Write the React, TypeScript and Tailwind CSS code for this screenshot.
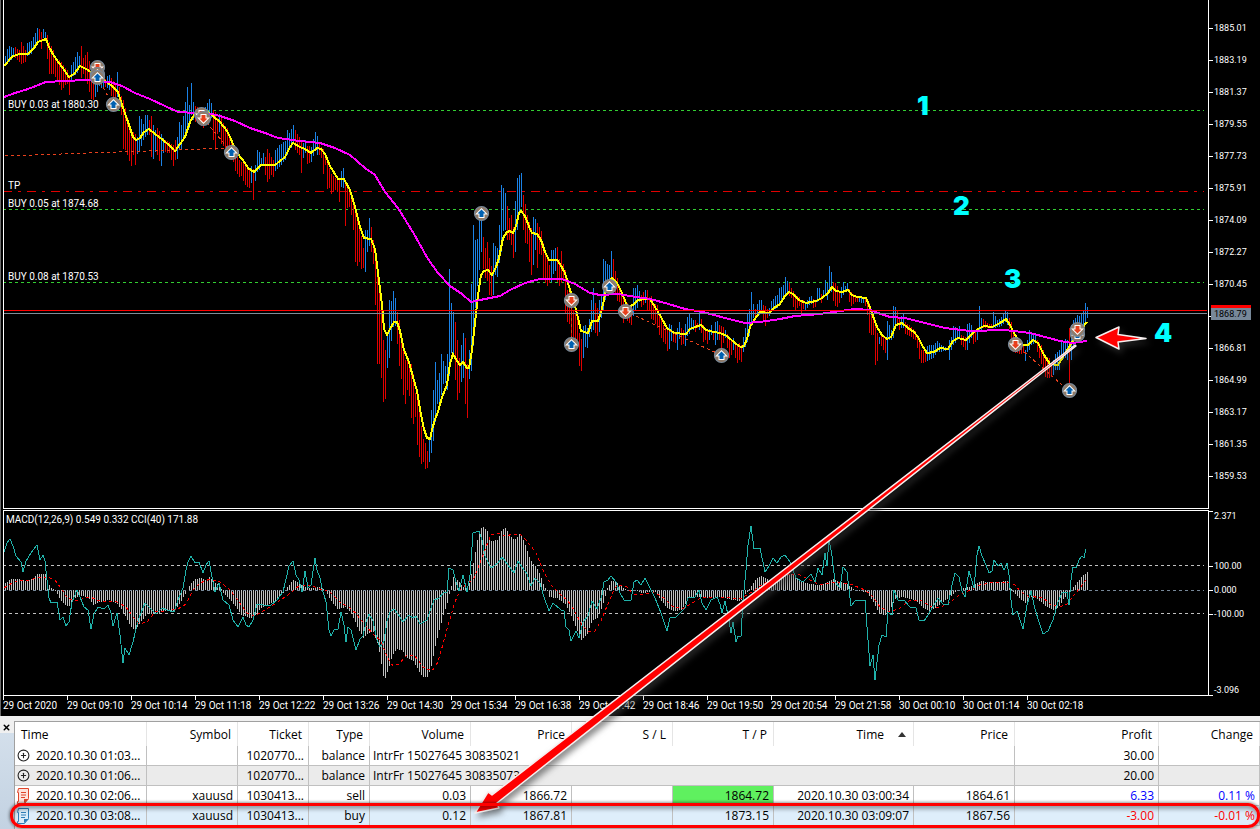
import type { ReactNode } from "react";
import { CirclePlus, X } from "lucide-react";

type Point = [number, number];

// "x,y x,y ..." -> points
const toPoints = (s: string): Point[] =>
  s
    .trim()
    .split(/\s+/)
    .map((p) => p.split(",").map(Number) as Point);

const BAR_STEP = 2;

// Bars: x,high,low. A leading r / b switches the colour for the bars that follow.
const BARS = `
b5,56,66 7,49,64 9,46,62 11,47,60 13,48,55 r15,47,58 19,50,62 21,42,64 25,50,62 b27,43,56 31,41,54 35,33,44 37,28,42
r39,29,40 41,32,49 b43,29,38 45,32,40 r47,35,59 49,42,74 53,50,74 55,60,77 59,60,85 61,62,90 65,68,85 67,70,84 69,75,95
b71,65,82 73,62,76 77,52,73 79,56,68 r81,46,78 83,58,74 87,52,84 91,70,99 93,74,100 b95,76,97 99,78,86 101,78,88
r105,79,87 b107,76,88 109,75,90 r111,78,96 115,83,103 b117,72,97 r119,87,108 121,96,115 123,100,149 125,108,150
127,117,155 131,130,166 133,132,155 135,134,165 b137,137,154 139,116,152 141,119,146 143,124,140 145,115,137 147,115,135
r149,120,135 151,116,157 b153,125,159 155,130,152 r157,128,155 b161,134,166 163,138,153 r165,140,152 169,142,153
173,145,166 175,140,160 b177,137,159 179,122,150 181,125,150 183,116,140 187,87,130 189,105,128 191,83,115 193,102,120
r195,106,122 199,108,124 203,108,128 b205,107,122 209,99,120 211,103,118 r213,110,140 215,112,150 217,118,134
b219,114,132 r221,115,144 223,123,146 227,128,150 229,135,150 233,150,162 235,154,171 239,160,177 241,162,176
245,162,185 249,170,188 b251,166,183 r253,169,200 b255,165,181 257,150,172 259,152,170 261,158,164 263,153,165
r265,157,175 267,149,182 271,157,175 273,160,177 b275,150,171 279,145,167 283,142,162 285,141,160 287,130,155
289,133,150 291,129,148 293,125,143 r295,130,150 299,137,155 301,141,173 b303,143,158 305,140,153 r307,146,164
309,146,163 b311,147,162 313,139,156 315,132,150 317,136,155 r319,143,155 321,147,158 323,149,174 325,155,165
327,162,189 329,168,188 331,174,194 335,178,190 337,180,192 339,179,202 b341,171,187 343,168,188 r345,180,226
347,187,208 349,190,207 351,195,215 353,199,230 355,210,262 357,221,266 359,227,262 361,236,269 363,248,268
b365,230,272 367,230,252 369,218,246 r371,227,252 373,240,264 375,248,305 377,264,364 379,282,364 381,305,378
383,340,402 385,350,399 b387,332,368 389,300,358 391,301,341 393,291,327 395,298,326 r397,312,344 399,320,366
401,333,379 403,350,395 405,360,404 407,356,390 409,363,396 411,364,418 413,374,424 415,393,417 417,395,445
419,405,457 421,426,464 423,439,462 425,443,469 427,451,468 b429,438,462 431,410,453 433,390,441 435,362,422
437,380,404 439,373,404 441,354,395 443,361,384 445,366,383 447,354,390 449,269,376 451,303,353 453,312,354
r455,322,380 457,340,400 459,358,393 b461,345,382 463,333,378 r465,338,404 467,364,418 b469,350,379 471,284,371
473,225,346 475,240,308 477,239,286 479,220,270 481,218,252 r483,237,269 485,248,278 487,242,281 489,258,295
491,266,296 b493,243,295 495,246,275 497,248,277 499,225,263 501,185,252 503,188,231 505,193,230 r507,206,240
509,218,240 511,215,245 513,227,258 b515,201,252 517,178,230 519,175,214 521,173,207 r523,195,230 525,204,243
527,215,244 529,222,262 531,228,275 b533,217,265 535,219,250 r537,223,268 539,227,254 541,231,255 543,243,280
545,250,283 547,256,286 549,265,283 b551,250,282 553,250,274 555,248,271 r557,247,282 559,259,286 561,251,283
563,264,279 565,270,313 567,290,322 569,292,324 571,298,340 573,310,337 577,318,340 579,333,366 581,339,371
b583,326,358 585,325,347 587,328,348 589,319,337 591,300,332 593,288,330 r595,303,333 597,308,336 b599,300,332
601,295,318 603,259,311 605,261,300 607,264,290 609,265,285 611,251,283 r613,259,285 615,271,295 617,278,301
619,285,302 623,295,323 625,300,318 629,305,323 631,306,325 b633,288,316 635,288,310 637,285,308 639,291,302
r641,295,307 643,292,305 b645,290,303 r647,290,310 649,297,310 651,296,319 653,303,320 657,305,328 659,315,335
661,318,338 663,325,342 665,328,344 667,330,351 b669,324,349 671,325,341 r673,331,342 675,335,343 b677,328,350
679,322,339 r681,328,345 683,330,344 b685,324,346 687,317,336 689,314,334 691,318,330 693,320,330 r695,320,332
697,323,328 b699,311,330 r701,319,333 703,325,342 705,328,340 707,330,344 b709,329,340 711,325,335 r713,331,340
b715,322,345 717,321,340 r719,325,340 721,326,350 723,327,343 b725,330,338 r727,334,348 729,340,358 731,340,355
b733,338,350 r735,343,358 737,345,363 739,343,360 741,345,362 b743,337,352 745,328,347 747,313,342 749,309,336
751,292,325 753,304,318 r755,309,320 b757,304,313 759,300,315 761,300,310 r763,305,320 765,306,326 767,309,318
b769,308,316 771,301,312 775,296,309 777,295,308 779,288,305 783,285,300 785,277,294 787,281,292 r789,283,296
791,288,298 793,291,307 795,294,310 799,297,306 801,301,315 803,300,309 b805,302,311 809,297,305 811,296,304
r813,299,308 815,301,307 b817,288,302 819,288,300 r821,294,303 b823,290,298 825,280,296 827,283,300 829,266,293
831,272,292 r833,282,301 835,283,306 837,286,307 839,291,303 b841,287,298 843,282,295 845,286,292 847,283,290
r849,289,302 851,292,306 855,296,302 857,297,302 b859,296,302 861,296,303 863,297,303 r865,298,306 867,299,315
869,303,333 871,310,335 873,315,335 875,322,365 877,333,361 b879,337,344 r881,336,346 885,338,353 b887,321,360
889,325,340 891,330,340 893,306,338 895,307,327 r897,311,325 899,318,330 b901,316,328 903,314,328 r905,322,334
909,325,336 915,331,340 917,335,348 919,340,359 921,350,363 925,350,362 b927,346,361 929,345,360 933,345,358
937,341,352 941,345,352 947,348,350 949,340,360 951,337,350 953,326,345 957,328,340 959,326,338 r961,335,345
963,336,347 965,337,350 b967,324,350 969,323,343 971,325,338 r973,330,344 b977,329,340 979,306,330 981,318,330
r983,319,328 987,323,328 991,324,328 b993,312,328 997,320,327 1001,317,326 1005,311,322 1007,312,325 r1009,318,329
1011,322,345 1013,333,352 1019,345,354 1023,346,353 b1025,350,361 1027,340,352 1029,330,350 1031,333,345 1035,334,343
r1037,340,352 1041,345,364 1045,355,377 1049,358,378 1051,363,377 b1053,360,375 1055,354,370 1059,350,370
1061,342,360 1065,339,358 1067,340,360 r1069,328,391 b1071,325,360 1073,320,345 1077,315,335 1079,316,330
1083,311,328 1085,303,325 1087,307,318`;

const FAST_MA =
  "4,66 13,56 20,54 28,54 34,48 38,42 46,39 49,47 54,56 62,67 69,77 74,74 80,66 88,70 97,77 104,80 112,86 118,92 122,105 128,122 133,137 136,140 140,138 144,132 149,129 155,134 163,140 170,146 175,151 180,144 185,137 190,122 194,115 200,110 208,112 214,117 220,122 227,131 231,139 236,152 243,160 248,168 254,172 261,165 275,165 285,157 290,147 293,143 300,147 305,149 311,153 317,148 321,149 325,154 330,166 338,179 344,179 350,190 355,207 360,227 364,238 371,239 375,249 378,273 382,305 384,329 387,335 390,329 394,322 397,322 400,331 404,350 409,362 413,377 417,391 421,415 424,429 427,438 430,439 432,430 435,419 438,412 442,397 447,385 450,364 453,354 457,361 460,365 463,362 467,368 469,368 472,350 475,323 478,295 481,275 484,271 488,270 492,275 496,267 499,258 503,238 507,232 510,231 513,233 516,226 519,213 521,211 525,216 530,229 532,233 537,234 541,240 545,252 549,260 557,260 560,264 565,273 570,290 574,302 578,318 581,331 588,333 592,321 598,321 601,312 604,300 607,283 612,278 617,283 622,293 628,308 634,304 638,300 645,299 650,299 655,307 661,317 667,328 674,333 686,334 690,329 695,327 701,325 706,330 714,332 720,333 727,336 736,344 741,347 744,346 747,339 750,327 754,320 760,312 769,313 774,308 780,304 785,296 789,292 793,294 799,300 806,303 816,301 822,298 828,293 832,287 836,291 842,292 848,290 852,295 857,297 866,298 869,305 873,316 877,327 882,335 887,339 891,337 896,325 902,323 908,328 914,332 918,337 922,345 927,353 934,352 940,348 948,349 953,341 958,338 966,340 972,334 978,329 984,326 992,327 1000,323 1006,319 1010,325 1015,335 1022,345 1028,345 1033,340 1038,343 1044,355 1050,364 1058,365 1063,357 1069,347 1077,335 1082,328 1087,322";

const SLOW_MA =
  "4,97 15,93 28,89 46,82 65,81 85,80 97,81 110,82 122,86 135,93 150,99 165,106 178,112 195,113 212,114 220,116 235,121 250,128 265,133 278,138 300,141 320,143 335,148 350,155 365,168 375,175 385,192 398,208 414,234 428,259 438,273 450,286 462,294 471,302 480,300 500,296 510,290 525,283 540,279 562,279 575,284 590,293 600,295 618,294 630,296 650,299 665,303 685,309 703,312 725,318 745,323 760,322 780,319 795,316 820,314 840,311 855,309 870,310 878,313 890,317 905,318 925,323 945,328 970,331 1005,330 1030,333 1045,337 1060,341 1072,343 1087,341";

const MACD =
  "5,583 11,579 19,579 25,581 29,580 33,578 37,574 45,574 48,583 51,588 54,590 57,594 61,601 65,605 69,606 73,600 78,596 84,596 88,598 93,605 99,602 108,600 116,603 121,609 127,620 131,627 134,630 137,627 141,621 147,614 156,614 163,611 174,611 179,604 185,594 190,584 195,579 200,578 205,580 209,577 214,582 219,585 223,593 229,599 235,606 241,615 247,617 250,619 256,614 261,608 269,604 275,602 282,594 288,586 293,580 298,583 304,587 314,588 318,587 322,588 325,591 331,601 337,609 345,607 351,613 358,629 363,638 368,633 373,632 378,646 382,670 384,681 388,669 392,656 396,649 402,650 406,658 413,661 418,670 422,677 427,677 431,666 435,646 439,630 443,615 447,603 450,590 453,577 458,581 463,587 467,588 470,580 473,563 477,540 480,530 482,526 487,531 490,541 497,540 502,529 505,528 510,536 514,540 520,533 525,545 530,560 538,570 543,584 547,591 549,597 557,598 565,604 571,616 577,631 581,640 587,634 592,620 598,617 603,603 607,588 611,581 616,582 622,587 628,591 636,590 642,593 648,592 655,592 660,600 667,608 674,611 681,610 686,603 689,597 697,597 710,598 722,597 732,600 740,601 746,593 750,588 755,580 760,576 765,578 770,581 780,578 790,574 795,576 800,581 810,584 818,585 826,583 832,579 840,582 847,584 853,589 860,591 866,592 872,600 878,612 884,616 889,611 895,599 902,597 910,599 917,602 923,608 928,611 934,609 941,603 950,597 956,591 962,588 968,587 975,584 981,581 988,582 996,582 1007,581 1012,591 1020,599 1025,603 1030,597 1036,598 1042,603 1048,608 1053,610 1058,608 1063,599 1068,594 1073,587 1078,581 1083,575 1087,572";

const SIGNAL =
  "4,588 12,583 20,580 30,580 40,577 48,577 55,580 61,588 67,598 75,601 82,599 90,597 100,601 117,602 126,607 134,618 139,624 147,622 155,612 165,611 178,609 186,604 193,590 200,583 210,579 220,582 230,590 240,603 247,613 255,616 265,610 275,604 288,595 300,585 310,585 320,589 330,592 340,602 352,609 362,621 372,633 381,641 387,657 393,666 399,664 407,655 415,656 423,667 432,671 438,662 443,644 449,622 455,602 460,590 468,583 474,578 480,563 486,547 491,535 497,533 505,536 514,534 520,534 527,541 536,553 543,570 551,585 560,594 568,601 574,610 582,625 588,631 595,631 601,621 607,606 613,592 617,585 627,587 633,594 645,594 654,592 664,598 672,606 682,609 692,603 702,597 720,597 740,599 752,592 763,584 775,579 790,574 800,575 810,580 820,585 835,582 850,584 865,590 873,597 880,607 890,612 900,608 910,600 920,600 930,606 938,608 948,604 958,596 970,590 980,585 990,583 1007,582 1015,585 1021,592 1028,596 1043,598 1050,604 1060,607 1067,604 1074,595 1080,588 1086,580";

const CCI =
  "4,552 7,543 10,539 13,546 16,556 21,562 23,572 26,561 31,553 37,545 40,560 43,555 45,561 47,580 49,598 51,603 57,602 60,620 63,617 66,626 69,622 72,602 77,590 80,597 84,607 88,610 91,629 94,614 98,607 104,609 108,605 111,613 113,626 117,613 120,635 123,663 125,648 129,655 133,642 136,629 139,618 145,603 150,608 156,614 162,608 167,610 174,612 178,600 183,588 186,570 188,562 191,556 195,563 199,562 203,573 206,565 209,561 212,577 215,592 219,583 223,600 229,605 233,620 238,627 243,617 246,625 249,627 253,620 257,604 263,605 270,606 277,600 283,592 286,579 289,566 293,561 296,575 299,580 302,592 305,571 308,588 311,585 315,558 317,570 320,578 322,588 326,602 329,630 331,636 334,630 338,629 341,612 344,625 346,642 348,627 351,630 356,650 360,639 363,636 366,622 369,614 373,621 377,640 380,647 384,641 387,621 390,612 394,609 398,614 403,622 409,615 413,618 416,616 420,624 427,620 431,608 434,600 439,598 444,592 447,592 449,568 453,570 456,582 459,591 463,575 467,592 470,575 473,533 479,531 482,540 485,556 491,568 498,563 502,557 508,565 514,573 518,561 522,567 527,574 531,586 535,578 540,583 544,597 549,611 553,603 561,610 564,611 566,627 569,630 571,641 576,631 579,638 583,622 588,616 592,601 597,609 602,595 604,582 608,580 611,576 616,582 620,593 624,600 631,600 634,582 637,580 641,585 645,578 650,588 655,598 661,613 667,631 670,618 676,617 681,612 685,608 688,598 695,597 699,590 702,603 706,610 711,600 717,597 720,604 722,613 725,601 729,620 731,633 733,622 736,642 738,636 741,636 743,600 746,570 748,545 751,526 754,549 760,548 765,572 769,566 773,558 777,563 781,557 785,555 790,562 796,578 803,582 808,577 811,574 815,582 818,568 822,575 825,553 827,566 829,539 832,556 835,582 840,588 843,567 847,572 851,606 855,601 865,600 868,640 870,666 873,655 875,680 879,645 882,635 886,637 888,612 892,615 894,590 898,600 904,600 910,607 916,608 919,620 924,621 928,615 934,605 938,598 943,604 948,605 952,585 955,573 959,577 962,591 965,597 969,571 974,588 977,555 979,546 982,556 986,565 989,573 992,571 994,560 998,566 1001,563 1004,570 1007,563 1009,575 1011,600 1013,615 1017,611 1023,629 1027,605 1031,591 1035,609 1039,622 1043,634 1048,631 1053,620 1058,602 1062,593 1067,592 1069,605 1071,580 1073,567 1076,568 1079,560 1082,556 1084,558 1086,549";

const lerp = (a: number, b: number, t: number) => Math.round(a + (b - a) * t);

// Builds one path per colour, filling in the bars between the listed ones
const buildBars = () => {
  const out = { r: "", b: "" };
  let color: "r" | "b" = "b";
  let prev: number[] | null = null;
  for (const token of BARS.trim().split(/\s+/)) {
    const next = token[0] === "r" || token[0] === "b" ? token[0] : color;
    const cur = token.replace(/^[rb]/, "").split(",").map(Number);
    if (prev) {
      for (let x = prev[0] + BAR_STEP; x < cur[0]; x += BAR_STEP) {
        const t = (x - prev[0]) / (cur[0] - prev[0]);
        out[color] += `M${x} ${lerp(prev[1], cur[1], t)}V${lerp(prev[2], cur[2], t)}h1V${lerp(prev[1], cur[1], t)}z`;
      }
    }
    color = next;
    out[color] += `M${cur[0]} ${cur[1]}V${cur[2]}h1V${cur[1]}z`;
    prev = cur;
  }
  return out;
};

const buildHistogram = () => {
  const pts = toPoints(MACD);
  let d = "";
  let i = 0;
  for (let x = 5; x <= 1087; x += BAR_STEP) {
    while (i < pts.length - 2 && pts[i + 1][0] < x) i++;
    const [x0, y0] = pts[i];
    const [x1, y1] = pts[i + 1];
    const y = lerp(y0, y1, (x - x0) / (x1 - x0));
    d += `M${x} 590V${y}h1V590z`;
  }
  return d;
};

const bars = buildBars();
const histogram = buildHistogram();

const orders = [
  { y: 110, label: "BUY 0.03 at 1880.30" },
  { y: 209, label: "BUY 0.05 at 1874.68" },
  { y: 282, label: "BUY 0.08 at 1870.53" },
];

const trades = [
  [5, 156, 231, 148],
  [97, 77, 113, 105],
  [203, 118, 231, 152],
  [571, 300, 571, 345],
  [625, 311, 721, 355],
  [1015, 344, 1069, 391],
];

const markers: { x: number; y: number; side: "up" | "down" }[] = [
  { x: 97, y: 67, side: "down" },
  { x: 97, y: 74, side: "up" },
  { x: 97, y: 77, side: "up" },
  { x: 113, y: 104, side: "up" },
  { x: 201, y: 114, side: "down" },
  { x: 203, y: 118, side: "down" },
  { x: 231, y: 152, side: "up" },
  { x: 481, y: 213, side: "up" },
  { x: 571, y: 300, side: "down" },
  { x: 571, y: 344, side: "up" },
  { x: 609, y: 286, side: "up" },
  { x: 625, y: 311, side: "down" },
  { x: 721, y: 355, side: "up" },
  { x: 1015, y: 344, side: "down" },
  { x: 1069, y: 390, side: "up" },
  { x: 1077, y: 334, side: "up" },
  { x: 1077, y: 329, side: "down" },
];

const prices = [
  "1885.01",
  "1883.19",
  "1881.37",
  "1879.55",
  "1877.73",
  "1875.91",
  "1874.09",
  "1872.27",
  "1870.45",
  "",
  "1866.81",
  "1864.99",
  "1863.17",
  "1861.35",
  "1859.53",
];

const times = [
  "29 Oct 2020",
  "29 Oct 09:10",
  "29 Oct 10:14",
  "29 Oct 11:18",
  "29 Oct 12:22",
  "29 Oct 13:26",
  "29 Oct 14:30",
  "29 Oct 15:34",
  "29 Oct 16:38",
  "29 Oct 17:42",
  "29 Oct 18:46",
  "29 Oct 19:50",
  "29 Oct 20:54",
  "29 Oct 21:58",
  "30 Oct 00:10",
  "30 Oct 01:14",
  "30 Oct 02:18",
];

const Marker = ({ x, y, side }: { x: number; y: number; side: "up" | "down" }) => (
  <g transform={`translate(${x + 0.5} ${y + 0.5})`}>
    <circle r="7" fill="#917b68" stroke="#778899" strokeWidth="1.2" />
    <path
      d="M0 -4L4 0H2V3.5H-2V0H-4z"
      transform={side === "down" ? "scale(1 -1)" : undefined}
      fill={side === "down" ? "#e8401c" : "#0060b0"}
      stroke="#fff"
      strokeWidth="2"
      paintOrder="stroke"
    />
  </g>
);

const PriceChart = () => (
  <svg className="block h-[508px] w-full" role="img" aria-label="Price chart">
    <g transform="translate(-4 0)">
      <g shapeRendering="crispEdges" fill="none">
        {orders.map((o) => (
          <line key={o.y} x1="3" x2="100%" y1={o.y + 0.5} y2={o.y + 0.5} stroke="#32cd32" strokeDasharray="3 3" />
        ))}
        <line x1="3" x2="100%" y1="191.5" y2="191.5" stroke="#e00000" strokeDasharray="9 6 3 6" />
        <path d={bars.b} fill="#1e90ff" fillOpacity="0.9" />
        <path d={bars.r} fill="#e00000" />
        <polyline points={FAST_MA} stroke="#ffff00" strokeWidth="2" />
        <polyline points={SLOW_MA} stroke="#ff00ff" strokeWidth="2" />
        <rect x="3" y="310" width="100%" height="1" fill="#ff0000" />
        <rect x="3" y="313" width="100%" height="1" fill="#808c98" />
        {trades.map(([x1, y1, x2, y2]) => (
          <line key={`${x1}-${y1}`} x1={x1} y1={y1} x2={x2} y2={y2} stroke="#e8401c" strokeDasharray="3 3" />
        ))}
      </g>
      {markers.map((m) => (
        <Marker key={`${m.x}-${m.y}`} {...m} />
      ))}
      <g fill="#fff" className="text-[10px]">
        {orders.map((o) => (
          <text key={o.label} x="8" y={o.y - 2}>
            {o.label}
          </text>
        ))}
        <text x="8" y="189">
          TP
        </text>
      </g>
      <g fill="#00ffff" className="font-['Inter',sans-serif] text-[26px] font-black">
        <text x="917" y="115">1</text>
        <text x="953" y="215">2</text>
        <text x="1004" y="288">3</text>
        <text x="1154" y="342">4</text>
      </g>
    </g>
  </svg>
);

const IndicatorChart = () => (
  <svg className="block h-[184px] w-full" role="img" aria-label="MACD and CCI">
    <g transform="translate(-4 -511)" shapeRendering="crispEdges" fill="none">
      <path d={histogram} fill="#c0c0c0" />
      <line x1="3" x2="100%" y1="565.5" y2="565.5" stroke="#c0c0c0" strokeDasharray="3 3" />
      <line x1="3" x2="100%" y1="590.5" y2="590.5" stroke="#778899" strokeDasharray="3 3" />
      <line x1="3" x2="100%" y1="613.5" y2="613.5" stroke="#c0c0c0" strokeDasharray="3 3" />
      <polyline points={SIGNAL} stroke="#ff0000" strokeDasharray="3 3" />
      <polyline points={CCI} stroke="#20b2aa" />
      <text x="6" y="523" fill="#fff" className="text-[10px]">
        MACD(12,26,9) 0.549 0.332 CCI(40) 171.88
      </text>
    </g>
  </svg>
);

const Tick = ({ children }: { children: ReactNode }) => (
  <div className="flex h-3 items-center gap-px">
    <span className="h-px w-1 bg-white" />
    <span>{children}</span>
  </div>
);

const Terminal = () => (
  <section className="overflow-hidden bg-black font-['Roboto',sans-serif] text-[10px] leading-3 text-white">
    <div className="border-l border-[#696969] pl-[2px]">
      <div className="flex">
        <div className="min-w-0 flex-1 border-x border-b border-white">
          <PriceChart />
        </div>
        <div className="relative w-[51px] pt-3 text-[9px]">
          {prices.map((p, i) => (
            <div key={i} className="flex h-8 items-center">
              <Tick>{p}</Tick>
            </div>
          ))}
          <div className="absolute left-0.5 top-[305px] w-10 border-t-[3px] border-[#ff0000] bg-[#778899] pl-[3px] text-black">
            1868.79
          </div>
        </div>
      </div>

      <div className="mt-px flex">
        <div className="min-w-0 flex-1 border border-white">
          <IndicatorChart />
        </div>
        <div className="flex w-[51px] flex-col text-[9px]">
          <div className="mb-[38px] flex h-3 items-start gap-px">
            <span className="mt-px h-px w-1 bg-white" />
            2.371
          </div>
          <Tick>100.00</Tick>
          <div className="my-3">
            <Tick>0.000</Tick>
          </div>
          <Tick>-100.00</Tick>
          <div className="mt-[64px] flex h-3 items-end gap-px">
            <span className="h-px w-1 bg-white" />
            -3.096
          </div>
        </div>
      </div>

      {/* time scale */}
      <div className="flex h-5">
        {times.map((t) => (
          <div key={t} className="w-16 shrink-0 whitespace-nowrap">
            <span className="block h-1 w-px bg-white" />
            {t}
          </div>
        ))}
      </div>
    </div>
  </section>
);

const DealIcon = ({ color, fill }: { color: string; fill: string }) => (
  <svg width="13" height="16" viewBox="0 0 13 16" fill="none" className="shrink-0">
    <path d="M1.5 0.5h10v10l-4 5h-7v-2h1v-9h-1z" fill={fill} stroke={color} />
    <path d="M4 4.5h5M4 7h5M4 9.5h4" stroke={color} />
    <path d="M7 15v-4h5z" fill={color} />
  </svg>
);

const balanceRows = [
  { time: "2020.10.30 01:03...", ticket: "1020770...", comment: "IntrFr 15027645 30835021", profit: "30.00", row: "" },
  { time: "2020.10.30 01:06...", ticket: "1020770...", comment: "IntrFr 15027645 30835073", profit: "20.00", row: "bg-[#ebebeb]" },
];

const dealRows = [
  {
    time: "2020.10.30 02:06...",
    type: "sell",
    volume: "0.03",
    open: "1866.72",
    tp: "1864.72",
    closed: "2020.10.30 03:00:34",
    close: "1864.61",
    profit: "6.33",
    change: "0.11 %",
    row: "",
    tpCell: "bg-[#5ff05f]",
    result: "text-[#0000ff]",
    icon: <DealIcon color="#e0452a" fill="#fde3dd" />,
  },
  {
    time: "2020.10.30 03:08...",
    type: "buy",
    volume: "0.12",
    open: "1867.81",
    tp: "1873.15",
    closed: "2020.10.30 03:09:07",
    close: "1867.56",
    profit: "-3.00",
    change: "-0.01 %",
    row: "bg-[#deeefb]",
    tpCell: "",
    result: "text-[#ff0000]",
    icon: <DealIcon color="#2f7fb8" fill="#d9ecf9" />,
  },
];

const headers = ["Symbol", "Ticket", "Type", "Volume", "Price", "S / L", "T / P", "Time", "Price", "Profit", "Change"];

const History = () => (
  <table className="w-full table-fixed border-separate border-spacing-0 whitespace-nowrap text-right text-[12px] leading-[19px] text-black [&_td]:h-5 [&_td]:border-b [&_td]:border-r [&_td]:border-[#c0c0c0] [&_td]:px-0 [&_td]:pr-1">
    <colgroup>
      <col className="w-[132px]" />
      <col className="w-[91px]" />
      <col className="w-[71px]" />
      <col className="w-[61px]" />
      <col className="w-[101px]" />
      <col className="w-[101px]" />
      <col className="w-[101px]" />
      <col className="w-[101px]" />
      <col className="w-[140px]" />
      <col className="w-[101px]" />
      <col />
      <col className="w-[101px]" />
    </colgroup>
    <thead>
      <tr className="h-6">
        <th className="border-r border-[#e5e5e5] p-0 pl-1.5 text-left font-normal">Time</th>
        {headers.map((h, i) => (
          <th key={i} className="border-r border-[#e5e5e5] p-0 pr-1.5 font-normal">
            {h}
            {h === "Time" && (
              <svg width="8" height="5" viewBox="0 0 8 5" className="mb-0.5 ml-3.5 mr-px inline-block">
                <path d="M4 0l4 5H0z" fill="#333" />
              </svg>
            )}
          </th>
        ))}
      </tr>
    </thead>
    <tbody>
      {balanceRows.map((r) => (
        <tr key={r.time} className={r.row}>
          <td>
            <div className="flex items-center gap-1.5 pl-0.5">
              <CirclePlus size={13} strokeWidth={2} className="shrink-0 text-[#222]" />
              {r.time}
            </div>
          </td>
          <td />
          <td>{r.ticket}</td>
          <td>balance</td>
          <td colSpan={6}>
            <div className="pl-[3px] text-left">{r.comment}</div>
          </td>
          <td>{r.profit}</td>
          <td />
        </tr>
      ))}
      {dealRows.map((r) => (
        <tr key={r.time} className={r.row}>
          <td>
            <div className="flex items-center gap-1.5 pl-0.5">
              {r.icon}
              {r.time}
            </div>
          </td>
          <td>xauusd</td>
          <td>1030413...</td>
          <td>{r.type}</td>
          <td>{r.volume}</td>
          <td>{r.open}</td>
          <td />
          <td className={r.tpCell}>{r.tp}</td>
          <td>{r.closed}</td>
          <td>{r.close}</td>
          <td className={r.result}>{r.profit}</td>
          <td className={r.result}>{r.change}</td>
        </tr>
      ))}
    </tbody>
  </table>
);

const Annotations = () => (
  <svg
    className="pointer-events-none absolute left-0 top-0 h-full w-full drop-shadow-[3px_4px_3px_rgba(60,60,60,0.6)]"
    aria-hidden="true"
  >
    <g fill="#ff0000" stroke="#f6efef" strokeWidth="1.5" strokeLinejoin="round">
      <path d="M475 813L488 792L492 795L1075 345L1076 346L497 803L499 808z" />
      <path d="M1096 337.5L1119 327L1118 334.5L1146 338.5L1118 342L1119 349z" />
    </g>
  </svg>
);

const App = () => {
  return (
    <main className="relative overflow-hidden bg-[#f0f0f0]">
      <Terminal />

      {/* toolbox */}
      <section className="flex pt-[5px] font-['Open_Sans','Noto_Sans',sans-serif]">
        <div className="flex w-[14px] shrink-0 flex-col">
          <button type="button" aria-label="Close" className="flex h-3 w-3 items-center justify-center text-black">
            <X size={9} strokeWidth={4} />
          </button>
          <div className="flex-1 bg-linear-to-b from-[#d3dfeb] to-[#c3d2e2]" />
        </div>
        <div className="min-w-0 flex-1 border-l border-t border-[#a0a0a0] bg-white">
          <History />
          <div className="h-[3px] bg-[#e4e4e4]" />
        </div>
      </section>

      <Annotations />
      <div className="pointer-events-none absolute bottom-px left-[10px] right-0 h-[25px] rounded-xl border-[3px] border-[#ff0000] shadow-[0_0_3px_1px_rgba(0,0,0,0.4),inset_0_3px_4px_rgba(0,0,0,0.35)]" />
    </main>
  );
};

export default App;
